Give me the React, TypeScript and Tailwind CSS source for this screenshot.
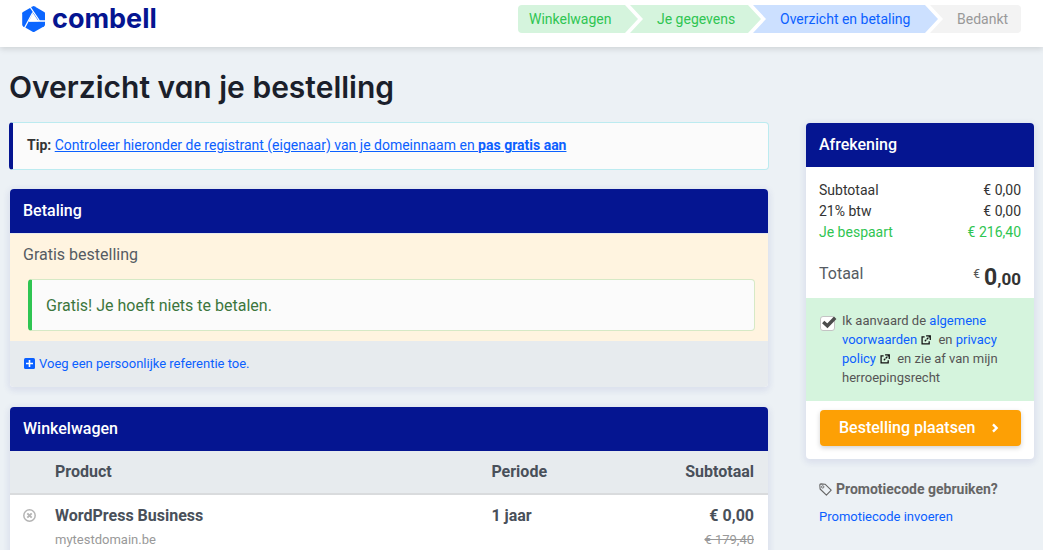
import type { ReactNode } from 'react';

const cardShadow = 'shadow-[0_2px_6px_2px_rgba(40,60,150,0.09)]';

function Logo() {
  return (
    <a href="#" className="flex items-start gap-[6px] text-[#051591]">
      <svg width="25" height="28" viewBox="0 0 25 28" aria-hidden="true">
        <path
          d="M12.1 1.2 Q12.7 0.9 13.3 1.2 L23.2 6.9 Q24 7.4 24 8.2 V19.8 Q24 20.7 23.2 21.2 L13.6 26.7 Q12.6 27.2 11.6 26.7 L2 21.2 Q1.2 20.7 1.2 19.8 V8.2 Q1.2 7.4 2 6.9Z"
          fill="#0b66ff"
        />
        <path d="M8.8 1.5 L18.6 16 M25 16 H8 M11.8 7.5 L3.2 23.5" fill="none" stroke="#fff" strokeWidth="1.3" />
        <path d="M12 8 L17.6 16.2 L7.6 16.4Z" fill="#fff" />
      </svg>
      <span className="font-['Inter',sans-serif] text-[27px] leading-7 font-bold">combell</span>
    </a>
  );
}

function Steps() {
  return (
    <ol className="flex text-[14px] leading-7 whitespace-nowrap">
      <li className="w-[120px] rounded-l bg-[#d5f4dd] pl-[11px] text-[#2fc552] [clip-path:polygon(0_0,calc(100%-13px)_0,100%_50%,calc(100%-13px)_100%,0_100%)]">
        <a href="#">Winkelwagen</a>
      </li>
      <li className="-ml-2 w-[131px] bg-[#d5f4dd] pl-[27px] text-[#2fc552] [clip-path:polygon(0_0,calc(100%-13px)_0,100%_50%,calc(100%-13px)_100%,0_100%,13px_50%)]">
        <a href="#">Je gegevens</a>
      </li>
      <li
        aria-current="step"
        className="-ml-2 w-[185px] bg-[#cce0ff] pl-[27px] text-[#0b60ff] [clip-path:polygon(0_0,calc(100%-13px)_0,100%_50%,calc(100%-13px)_100%,0_100%,13px_50%)]"
      >
        Overzicht en betaling
      </li>
      <li className="-ml-2 w-[91px] rounded-r bg-[#f3f3f3] pl-[27px] text-[#999] [clip-path:polygon(0_0,100%_0,100%_100%,0_100%,13px_50%)]">
        Bedankt
      </li>
    </ol>
  );
}

function Card({ title, children }: { title: string; children: ReactNode }) {
  return (
    <section className={`overflow-hidden rounded bg-white ${cardShadow}`}>
      <h2 className="bg-[#051591] px-[13px] py-[10px] text-[16px] leading-6 font-medium text-white">{title}</h2>
      {children}
    </section>
  );
}

function ExternalIcon() {
  return (
    <svg width="10" height="10" viewBox="0 0 11 11" className="mx-1 inline align-[-1px]" fill="none" stroke="#111" strokeWidth="1.4" aria-hidden="true">
      <path d="M4 2 H1.2 V9.8 H9 V7" />
      <path d="M5.6 0.9 H10.2 V5.4" />
      <path d="M4.2 6.8 L9.8 1.3" strokeDasharray="2.4 0.6" />
    </svg>
  );
}

function TotalRow({ label, value, green }: { label: string; value: string; green?: boolean }) {
  return (
    <div className={green ? 'flex justify-between text-[#2fc552]' : 'flex justify-between text-[#333]'}>
      <dt>{label}</dt>
      <dd>{value}</dd>
    </div>
  );
}

export default function App() {
  return (
    <div className="min-h-screen bg-[#ecf1f5] font-['Roboto',sans-serif] text-[#555]">
      <header className="flex h-[47px] items-start justify-between bg-white pt-[5px] pr-[22px] pl-[21px] shadow-[0_2px_6px_rgba(0,0,0,0.13)]">
        <Logo />
        <Steps />
      </header>

      <main className="px-[9px] pt-5">
        <h1 className="font-['Inter',sans-serif] text-[30px] leading-10 font-semibold text-[#1b1f2b] [font-feature-settings:'cv11']">
          Overzicht van je bestelling
        </h1>

        <div className="mt-[15px] flex items-start gap-[37px]">
          <div className="min-w-0 flex-1">
            <p className="rounded border border-l-4 border-[#bcebf0] border-l-[#051591] bg-[#fbfbfb] px-[14px] pt-3 pb-[14px] text-[14px] leading-5 text-[#333]">
              <b className="font-bold">Tip:</b>{' '}
              <a href="#" className="text-[#0b60ff] underline">
                Controleer hieronder de registrant (eigenaar) van je domeinnaam en <b className="font-bold">pas gratis aan</b>
              </a>
            </p>

            <div className="mx-px mt-[19px] flex flex-col gap-5">
              <Card title="Betaling">
                <div className="border-t border-[#e7eaec] bg-[#fff4e0] px-[13px] pt-[9px] pb-[10px]">
                  <p className="text-[16px] leading-6 text-[#555b63]">Gratis bestelling</p>
                  <p className="mt-3 ml-[5px] rounded border border-l-4 border-[#d6e9c6] border-l-[#2fc552] bg-[#fbfbfb] px-[14px] pt-[14px] pb-3 text-[16px] leading-6 text-[#3c763d]">
                    Gratis! Je hoeft niets te betalen.
                  </p>
                </div>
                <div className="bg-[#e7ebee] px-[14px] py-[13px] text-[13px] leading-5">
                  <button type="button" className="flex items-center gap-1 text-[#0b60ff]">
                    <svg width="11" height="11" viewBox="0 0 11 11" className="mb-0.5" aria-hidden="true">
                      <rect width="11" height="11" rx="1.5" fill="#0b60ff" />
                      <path d="M5.5 2 V9 M2 5.5 H9" stroke="#fff" strokeWidth="1.6" />
                    </svg>
                    Voeg een persoonlijke referentie toe.
                  </button>
                </div>
              </Card>

              <Card title="Winkelwagen">
                <table className="w-full table-fixed text-left text-[16px] leading-6 text-[#49505a]">
                  <colgroup>
                    <col className="w-[45px]" />
                    <col />
                    <col className="w-[20%]" />
                    <col className="w-[125px]" />
                  </colgroup>
                  <thead>
                    <tr className="border-b-2 border-[#d9dbdd] bg-[#e7ebee]">
                      <td />
                      <th scope="col" className="py-[9px] font-bold">Product</th>
                      <th scope="col" className="py-[9px] font-bold">Periode</th>
                      <th scope="col" className="py-[9px] pr-[14px] text-right font-bold">Subtotaal</th>
                    </tr>
                  </thead>
                  <tbody>
                    <tr className="align-top">
                      <td className="pt-[14px] pl-[13px]">
                        <button type="button" aria-label="Verwijderen" className="block">
                          <svg width="13" height="13" viewBox="0 0 13 13" fill="none" stroke="#b5b5b5" aria-hidden="true">
                            <circle cx="6.5" cy="6.5" r="5.7" strokeWidth="1.5" />
                            <path d="M4.3 4.3 L8.7 8.7 M8.7 4.3 L4.3 8.7" strokeWidth="1.9" />
                          </svg>
                        </button>
                      </td>
                      <td className="pt-[9px] pb-3">
                        <p className="font-bold">WordPress Business</p>
                        <p className="text-[13px] text-[#999]">mytestdomain.be</p>
                      </td>
                      <td className="pt-[9px] font-bold">1 jaar</td>
                      <td className="pt-[9px] pr-[14px] text-right">
                        <p className="font-bold">€ 0,00</p>
                        <p className="text-[13px] text-[#999]"><s>€ 179,40</s></p>
                      </td>
                    </tr>
                  </tbody>
                </table>
              </Card>
            </div>
          </div>

          <aside className="mt-px w-[228px] shrink-0">
            <Card title="Afrekening">
              <dl className="px-[13px] pt-[13px] text-[14px] leading-[21px]">
                <TotalRow label="Subtotaal" value="€ 0,00" />
                <TotalRow label="21% btw" value="€ 0,00" />
                <TotalRow label="Je bespaart" value="€ 216,40" green />
                <div className="mt-4 flex items-start justify-between pb-[9px]">
                  <dt className="text-[16px] leading-[30px] text-[#555b63]">Totaal</dt>
                  <dd className="flex items-baseline pt-[7px] leading-none font-bold text-[#333]">
                    <span className="mr-1 self-start text-[12px] leading-4 font-normal text-[#555]">€</span>
                    <span className="text-[23px] leading-[23px]">0</span>
                    <span className="text-[17px] leading-[17px]">,00</span>
                  </dd>
                </div>
              </dl>
              <div className="flex items-start gap-[6px] bg-[#d5f4dd] pt-[13px] pr-[13px] pb-[14px] pl-[14px] text-[13px] leading-[19px]">
                <span className="relative mt-[5px] block h-[15px] w-[16px] shrink-0">
                  <input
                    id="terms"
                    type="checkbox"
                    defaultChecked
                    className="peer block h-[15px] w-[15px] appearance-none rounded-[3px] border border-[#c4c4c4] bg-white"
                  />
                  <svg
                    width="15"
                    height="13"
                    viewBox="0 0 15 13"
                    className="pointer-events-none absolute top-0 left-0.5 hidden peer-checked:block"
                    aria-hidden="true"
                  >
                    <path d="M1.2 6 L5.4 9.8 L13.2 1.8" fill="none" stroke="#4d4d4d" strokeWidth="3.4" />
                  </svg>
                </span>
                <p>
                  <label htmlFor="terms">Ik aanvaard de </label>
                  <a href="#" className="text-[#0b60ff]">algemene voorwaarden</a>
                  <ExternalIcon /> en <a href="#" className="text-[#0b60ff]">privacy policy</a>
                  <ExternalIcon /> en zie af van mijn herroepingsrecht
                </p>
              </div>
              <div className="pt-[9px] pr-[13px] pb-[13px] pl-[14px]">
                <button
                  type="button"
                  className="flex h-9 w-full items-center rounded bg-[#fda005] pl-[19px] text-[16px] font-medium text-white shadow-[0_2px_5px_rgba(0,0,0,0.18)]"
                >
                  Bestelling plaatsen
                  <svg width="8" height="10" viewBox="0 0 8 10" className="ml-[16px]" fill="none" stroke="#fff" strokeWidth="2.4" aria-hidden="true">
                    <path d="M2 1.4 L5.6 5 L2 8.6" />
                  </svg>
                </button>
              </div>
            </Card>

            <div className="px-[13px] pt-5">
              <h3 className="flex items-center gap-1 text-[14px] leading-5 font-bold text-[#666]">
                <svg width="13" height="13" viewBox="0 0 13 13" fill="none" stroke="#666" strokeWidth="1.1" strokeLinejoin="round" aria-hidden="true">
                  <path d="M0.8 2 Q0.8 0.9 2 0.9 L6 1.2 L12.2 7.2 L7.4 12.2 L1.1 6Z" />
                  <circle cx="3.7" cy="3.9" r="1.2" strokeWidth="0.9" />
                </svg>
                Promotiecode gebruiken?
              </h3>
              <a href="#" className="mt-2 block text-[13px] leading-5 text-[#0b60ff]">Promotiecode invoeren</a>
            </div>
          </aside>
        </div>
      </main>
    </div>
  );
}
